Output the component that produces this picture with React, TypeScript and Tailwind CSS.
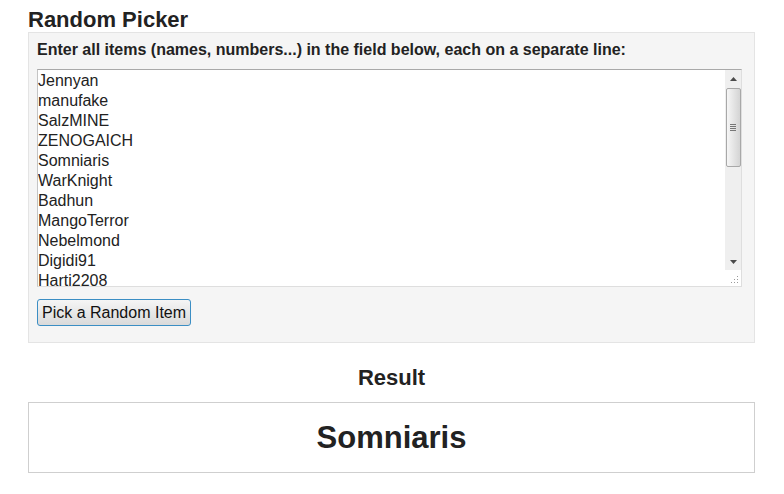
import React from "react";

const items = [
  "Jennyan",
  "manufake",
  "SalzMINE",
  "ZENOGAICH",
  "Somniaris",
  "WarKnight",
  "Badhun",
  "MangoTerror",
  "Nebelmond",
  "Digidi91",
  "Harti2208",
];

const Arrow = ({ down }: { down?: boolean }) => (
  <svg width="7" height="4" viewBox="0 0 7 4" className="block">
    <path d={down ? "M0 0 H7 L3.5 4 Z" : "M0 4 H7 L3.5 0 Z"} fill="#4a4a4a" />
  </svg>
);

const Scrollbar = () => (
  <div className="flex w-[16px] flex-col">
    <div className="flex flex-1 flex-col bg-[#efefef]">
      <div className="flex h-[17px] items-center justify-center">
        <Arrow />
      </div>
      <div className="mx-auto mt-px flex h-[79px] w-[15px] items-center justify-center rounded-[2px] border border-[#a8a8a8] bg-gradient-to-r from-[#f6f6f6] to-[#d4d4d4]">
        <div className="flex flex-col gap-[1px]">
          <div className="h-px w-[6px] bg-[#777]" />
          <div className="h-px w-[6px] bg-[#777]" />
          <div className="h-px w-[6px] bg-[#777]" />
          <div className="h-px w-[6px] bg-[#777]" />
        </div>
      </div>
      <div className="flex-1" />
      <div className="flex h-[17px] items-center justify-center">
        <Arrow down />
      </div>
    </div>
    {/* resize grip */}
    <div className="flex h-[16px] items-end justify-end bg-white p-[2px]">
      <svg width="9" height="9" viewBox="0 0 9 9">
        <g fill="#9a9a9a">
          <rect x="7" y="1" width="1" height="1" />
          <rect x="4" y="4" width="1" height="1" />
          <rect x="7" y="4" width="1" height="1" />
          <rect x="1" y="7" width="1" height="1" />
          <rect x="4" y="7" width="1" height="1" />
          <rect x="7" y="7" width="1" height="1" />
        </g>
      </svg>
    </div>
  </div>
);

export default function App() {
  return (
    <div className="px-[28px] font-['Liberation_Sans',Arial,sans-serif] text-[#222]">
      <h1 className="pt-[7px] text-[22px] font-bold leading-[25px]">Random Picker</h1>

      <div className="w-[727px] border border-[#e4e4e4] bg-[#f5f5f5] px-[8px] pb-[16px] pt-[8px]">
        <label className="block text-[16px] font-bold leading-[18px]">
          Enter all items (names, numbers...) in the field below, each on a separate line:
        </label>

        <div className="mt-[10px] flex h-[218px] w-[705px] border border-b-[#dedede] border-l-[#c4c4c4] border-r-[#dedede] border-t-[#a9a9a9] bg-white">
          <div className="flex-1 overflow-hidden pt-px text-[16px] leading-[20px]">
            {items.map((name) => (
              <div key={name}>{name}</div>
            ))}
          </div>
          <Scrollbar />
        </div>

        <button className="mt-[12px] h-[27px] rounded-[3px] border border-[#3b8ec4] bg-gradient-to-b from-[#f5f5f5] to-[#dadada] px-[4px] text-[16px] leading-[20px] text-[#111]">
          Pick a Random Item
        </button>
      </div>

      <h2 className="mt-[22px] w-[727px] text-center text-[22px] font-bold leading-[25px]">Result</h2>

      <div className="mt-[12px] flex h-[71px] w-[727px] items-center justify-center border border-[#cfcfcf]">
        <span className="text-[31px] font-bold leading-[36px]">Somniaris</span>
      </div>
    </div>
  );
}
